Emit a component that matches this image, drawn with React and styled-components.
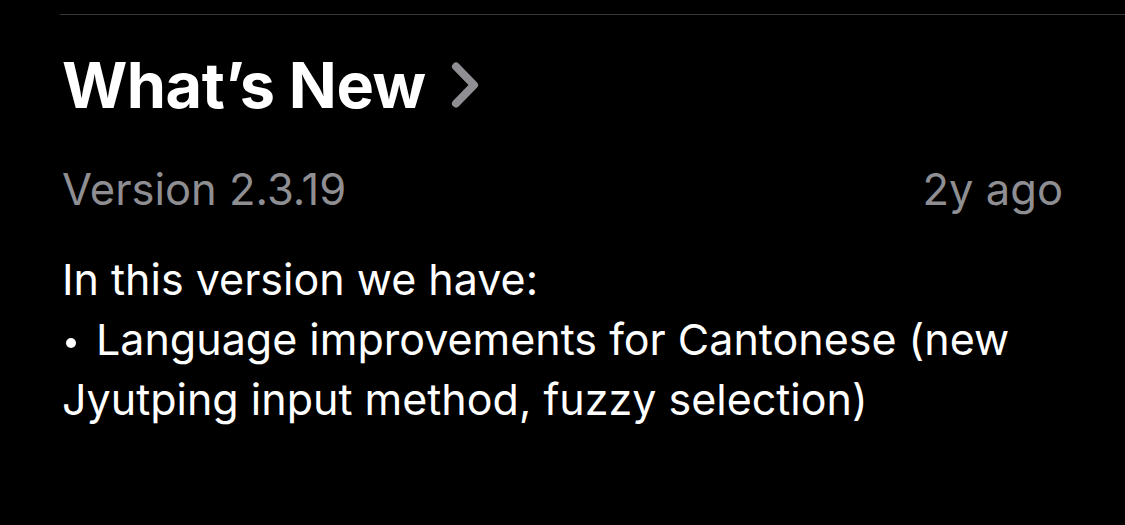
import React from "react";
import styled, { createGlobalStyle } from "styled-components";

const Global = createGlobalStyle`
  html, body { margin: 0; padding: 0; background: #000; }
  body { font-family: Inter, "Noto Sans", sans-serif; -webkit-font-smoothing: antialiased; }
`;

const Page = styled.div`
  width: 1125px;
  height: 525px;
  background: #000;
  overflow: hidden;
  display: flex;
  flex-direction: column;
`;

const Divider = styled.div`
  margin-left: 60px;
  margin-top: 14px;
  height: 1px;
  background: #3a3a3c;
`;

const Section = styled.div`
  padding: 0 62px;
  display: flex;
  flex-direction: column;
`;

const TitleRow = styled.div`
  display: flex;
  align-items: center;
  gap: 24px;
  margin-top: 32px;
  height: 76px;
`;

const Title = styled.h2`
  margin: 0;
  font-size: 63px;
  font-weight: 700;
  color: #fff;
  letter-spacing: -0.5px;
  line-height: 76px;
`;

const ChevronBox = styled.span`
  display: flex;
`;

const MetaRow = styled.div`
  display: flex;
  justify-content: space-between;
  align-items: center;
  margin-top: 40px;
  font-size: 43.5px;
  color: #8e8e93;
  line-height: 52px;
`;

const Notes = styled.div`
  margin-top: 34px;
  font-size: 43px;
  line-height: 60px;
  color: #fff;
`;

const Line = styled.div``;

const BulletItem = styled.div`
  &::before {
    content: "";
    display: inline-block;
    width: 10px;
    height: 10px;
    border-radius: 50%;
    background: #fff;
    vertical-align: 7px;
    margin-left: 4px;
    margin-right: 20px;
  }
`;

const Chevron = () => (
  <svg width="30" height="48" viewBox="0 0 30 48" fill="none">
    <path d="M6 5.5 L24 24 L6 42.5" stroke="#8e8e93" strokeWidth="8" strokeLinecap="round" strokeLinejoin="round" />
  </svg>
);

export default function App() {
  return (
    <Page>
      <Global />
      <Divider />
      <Section>
        <TitleRow>
          <Title>What’s New</Title>
          <ChevronBox>
            <Chevron />
          </ChevronBox>
        </TitleRow>
        <MetaRow>
          <span>Version 2.3.19</span>
          <span>2y ago</span>
        </MetaRow>
        <Notes>
          <Line>In this version we have:</Line>
          <BulletItem>
            Language improvements for Cantonese (new
            <br />
            Jyutping input method, fuzzy selection)
          </BulletItem>
        </Notes>
      </Section>
    </Page>
  );
}
